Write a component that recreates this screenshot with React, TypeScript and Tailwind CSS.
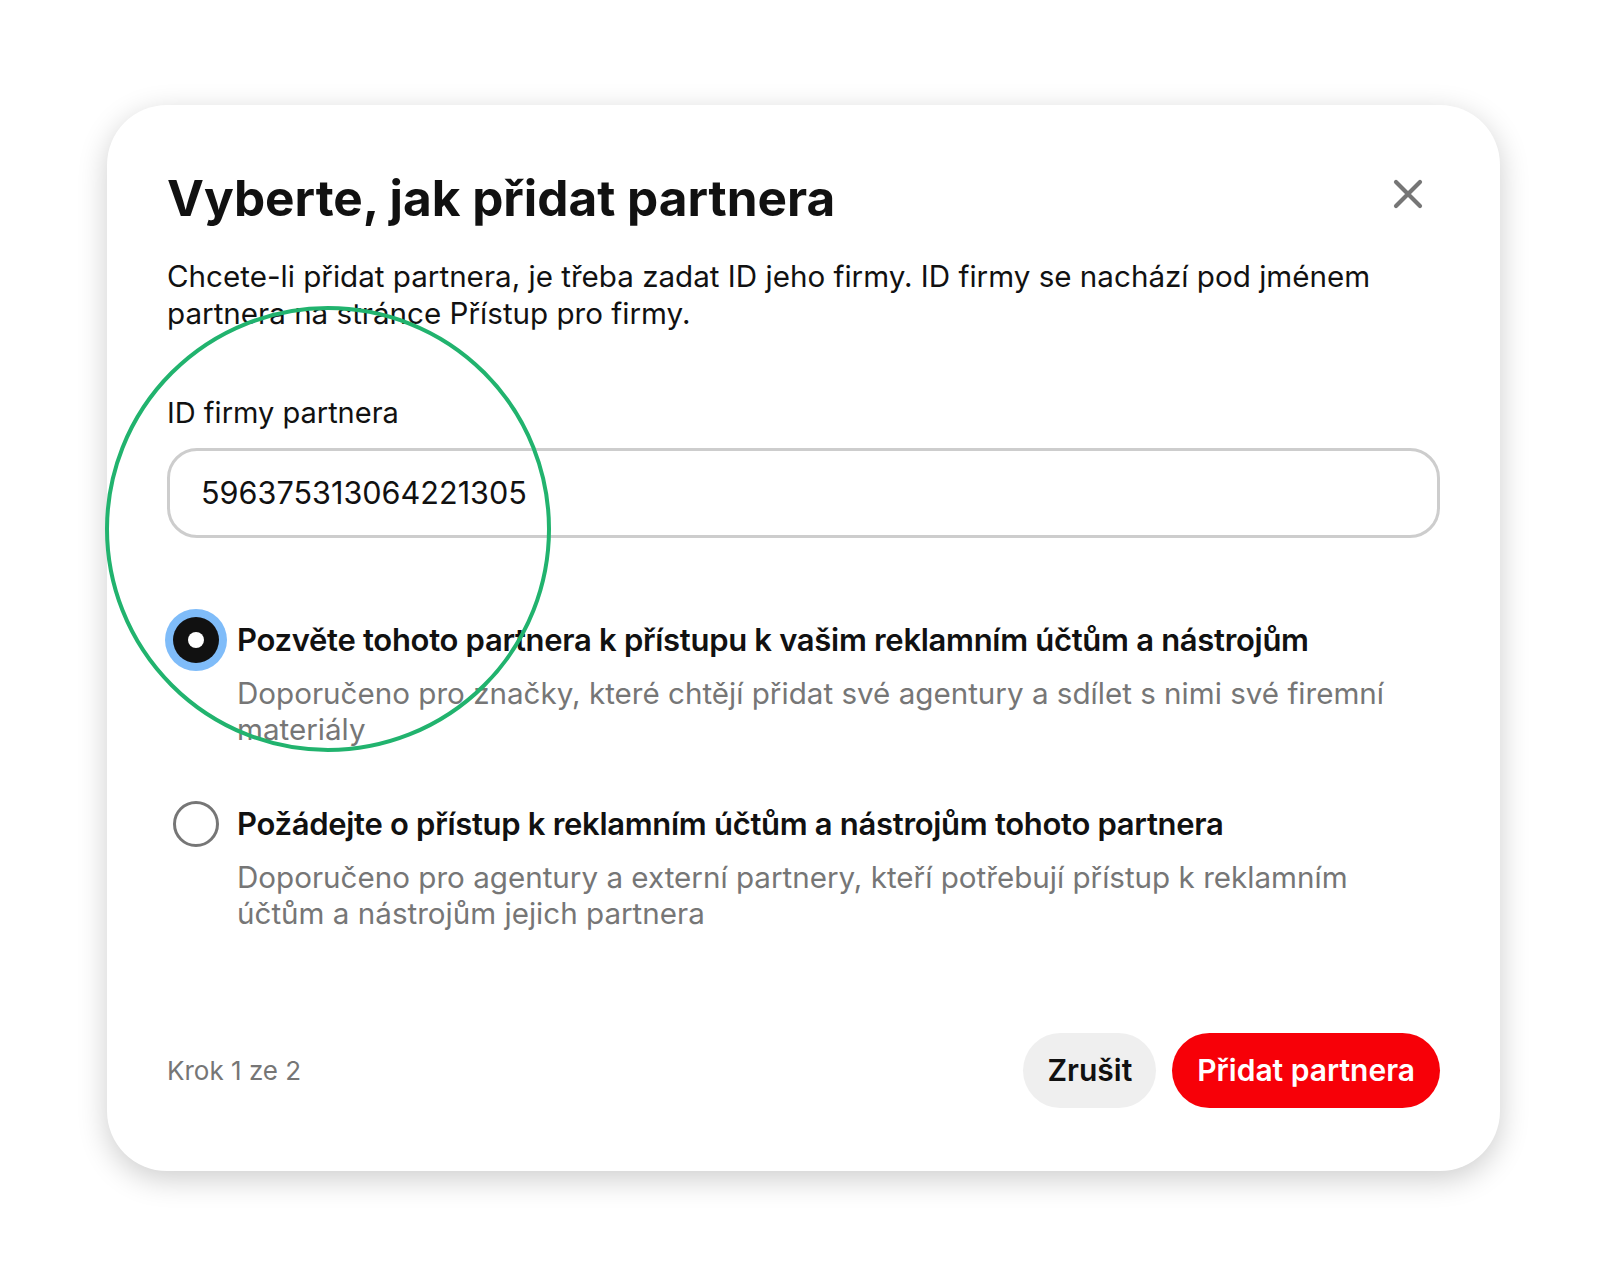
import { useState } from 'react';

const font = { fontFamily: 'Inter, "Noto Sans", sans-serif' };

const CloseIcon = () => (
  <svg width="30" height="30" viewBox="0 0 30 30" fill="none">
    <path d="M3 3L27 27M27 3L3 27" stroke="#767676" strokeWidth="4.2" strokeLinecap="round" />
  </svg>
);

const Radio = ({ checked }: { checked: boolean }) =>
  checked ? (
    <div className="flex h-[46px] w-[46px] items-center justify-center rounded-full bg-[#111111] shadow-[0_0_0_8px_#7fbcf9]">
      <div className="h-[16px] w-[16px] rounded-full bg-white" />
    </div>
  ) : (
    <div className="h-[46px] w-[46px] rounded-full border-[3px] border-[#767676] bg-white" />
  );

type OptionProps = {
  checked: boolean;
  title: string;
  description: string;
  onSelect: () => void;
};

const Option = ({ checked, title, description, onSelect }: OptionProps) => (
  <div className="flex cursor-pointer gap-3" onClick={onSelect}>
    <div className="flex h-[40px] w-[58px] shrink-0 items-center justify-center">
      <Radio checked={checked} />
    </div>
    <div className="flex-1 pr-[40px]">
      <div className="text-[31px] leading-[40px] font-semibold tracking-[-0.3px] text-[#111111]">{title}</div>
      <div className="mt-[15px] text-[29.6px] leading-[36px] text-[#767676]">{description}</div>
    </div>
  </div>
);

const App = () => {
  const [choice, setChoice] = useState(0);

  return (
    <div className="min-h-screen bg-white pt-[105px] pl-[107px]" style={font}>
      <div className="relative w-[1393px] rounded-[60px] bg-white px-[60px] pt-[65px] pb-[63px] shadow-[0_8px_30px_rgba(0,0,0,0.2)]">
        <div className="flex items-center justify-between">
          <h1 className="text-[49.5px] leading-[56px] font-bold text-[#111111]">Vyberte, jak přidat partnera</h1>
          <button className="mr-[17px] -mt-[8px]">
            <CloseIcon />
          </button>
        </div>

        <p className="mt-[32px] pr-[20px] text-[29.6px] leading-[37px] text-[#111111]">
          Chcete-li přidat partnera, je třeba zadat ID jeho firmy. ID firmy se nachází pod jménem partnera na stránce
          Přístup pro firmy.
        </p>

        <label className="mt-[63px] block text-[29px] leading-[36px] text-[#111111]">ID firmy partnera</label>
        <div className="mt-[17px] flex h-[90px] items-center rounded-[30px] border-[3px] border-[#cdcdcd] pl-[31px] text-[30.6px] text-[#111111]">
          596375313064221305
        </div>

        <div className="mt-[82px]">
          <Option
            checked={choice === 0}
            onSelect={() => setChoice(0)}
            title="Pozvěte tohoto partnera k přístupu k vašim reklamním účtům a nástrojům"
            description="Doporučeno pro značky, které chtějí přidat své agentury a sdílet s nimi své firemní materiály"
          />
        </div>
        <div className="mt-[57px]">
          <Option
            checked={choice === 1}
            onSelect={() => setChoice(1)}
            title="Požádejte o přístup k reklamním účtům a nástrojům tohoto partnera"
            description="Doporučeno pro agentury a externí partnery, kteří potřebují přístup k reklamním účtům a nástrojům jejich partnera"
          />
        </div>

        <div className="mt-[102px] flex items-center justify-between">
          <span className="text-[26px] leading-[32px] text-[#767676]">Krok 1 ze 2</span>
          <div className="flex gap-4">
            <button className="h-[75px] rounded-full bg-[#efefef] px-6 text-[30px] font-semibold text-[#111111]">Zrušit</button>
            <button className="h-[75px] rounded-full bg-[#f70008] px-[25px] text-[30px] font-semibold text-white">
              Přidat partnera
            </button>
          </div>
        </div>

        <div className="pointer-events-none absolute top-[201px] left-[-2px] h-[446px] w-[446px] rounded-full border-[4.5px] border-[#21b36e]" />
      </div>
    </div>
  );
};

export default App;
